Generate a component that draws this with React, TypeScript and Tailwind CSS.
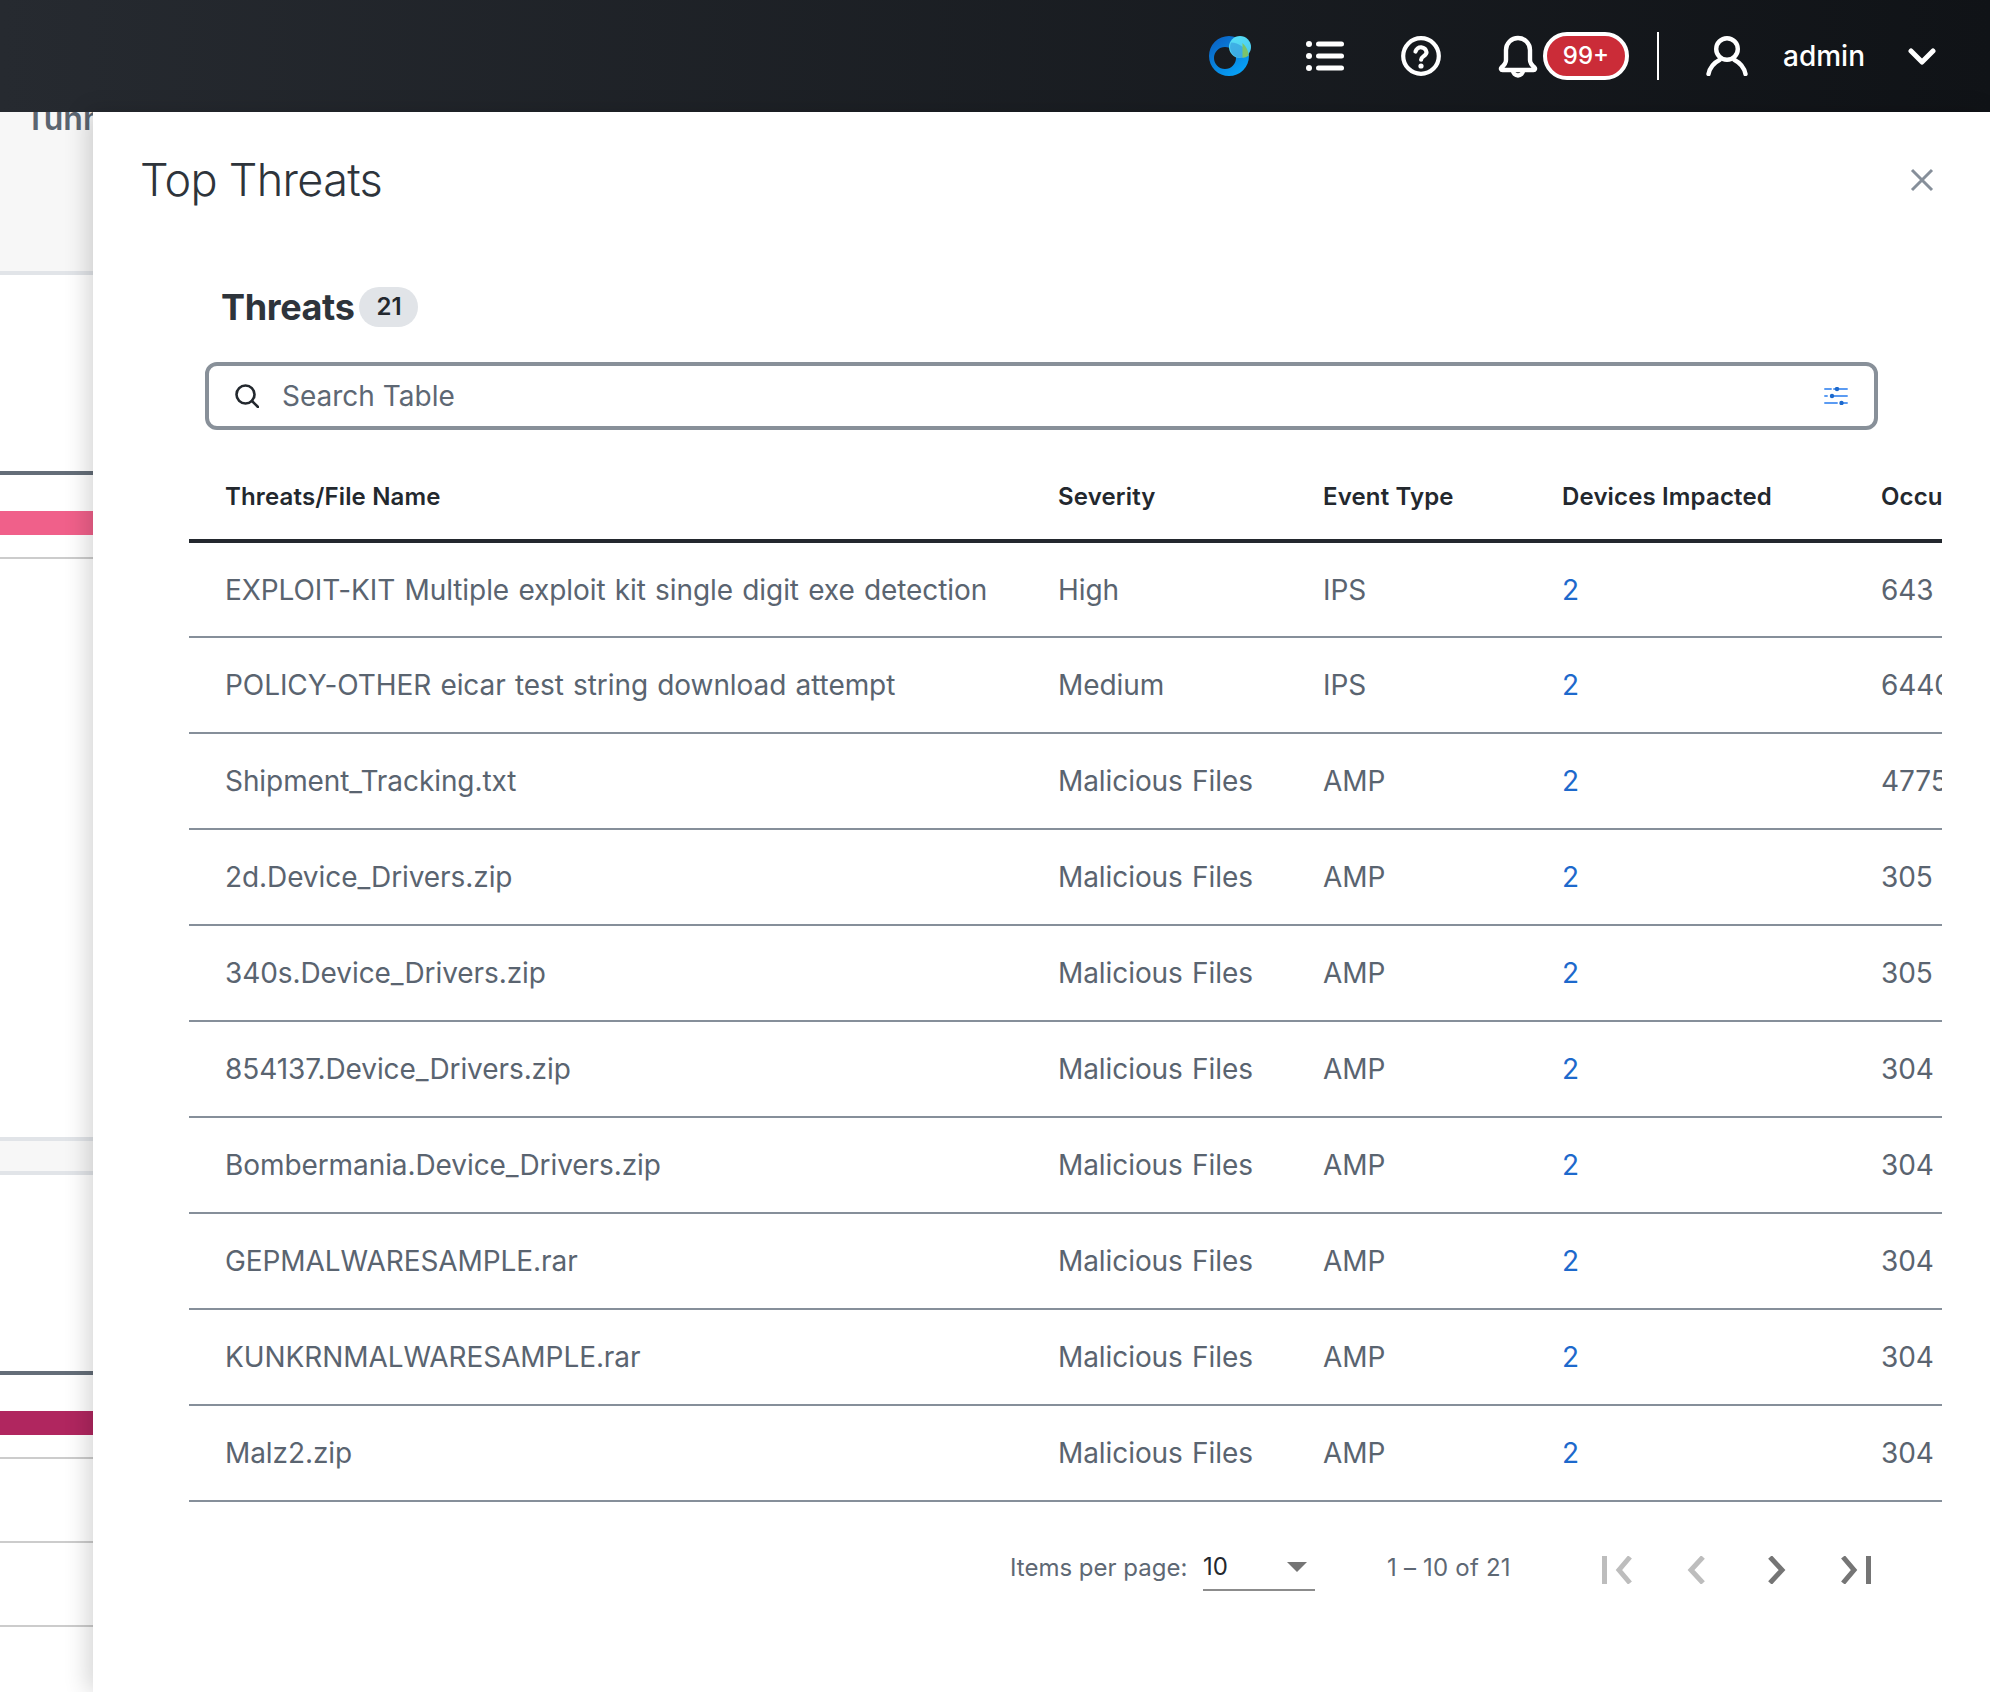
const rows = [
  { name: "EXPLOIT-KIT Multiple exploit kit single digit exe detection", severity: "High", type: "IPS", count: "643" },
  { name: "POLICY-OTHER eicar test string download attempt", severity: "Medium", type: "IPS", count: "6440" },
  { name: "Shipment_Tracking.txt", severity: "Malicious Files", type: "AMP", count: "4775" },
  { name: "2d.Device_Drivers.zip", severity: "Malicious Files", type: "AMP", count: "305" },
  { name: "340s.Device_Drivers.zip", severity: "Malicious Files", type: "AMP", count: "305" },
  { name: "854137.Device_Drivers.zip", severity: "Malicious Files", type: "AMP", count: "304" },
  { name: "Bombermania.Device_Drivers.zip", severity: "Malicious Files", type: "AMP", count: "304" },
  { name: "GEPMALWARESAMPLE.rar", severity: "Malicious Files", type: "AMP", count: "304" },
  { name: "KUNKRNMALWARESAMPLE.rar", severity: "Malicious Files", type: "AMP", count: "304" },
  { name: "Malz2.zip", severity: "Malicious Files", type: "AMP", count: "304" },
];

function Logo() {
  return (
    <svg width="44" height="42" viewBox="0 0 44 42" fill="none" className="shrink-0">
      <defs>
        <linearGradient id="ring" x1="4" y1="4" x2="30" y2="38" gradientUnits="userSpaceOnUse">
          <stop offset="0" stopColor="#0a62c4" />
          <stop offset="1" stopColor="#07a0f5" />
        </linearGradient>
        <linearGradient id="dot" x1="26" y1="2" x2="38" y2="24" gradientUnits="userSpaceOnUse">
          <stop offset="0" stopColor="#56dcf5" />
          <stop offset="1" stopColor="#48c9ee" />
        </linearGradient>
      </defs>
      <path
        fillRule="evenodd"
        clipRule="evenodd"
        d="M20 1a20 20 0 1 0 0 40a20 20 0 0 0 0-40ZM16 12a11 11 0 1 1 0 22a11 11 0 0 1 0-22Z"
        fill="url(#ring)"
      />
      <circle cx="31" cy="12" r="11" fill="url(#dot)" />
      <path d="M22 7.500a20 20 0 0 1 17.700 13a11 11 0 0 1-8.200 2.500a11 11 0 0 1-9.500-15.500Z" fill="#2f8fd8" opacity="0.55" />
      <path d="M33.500 8a20 20 0 0 1 6.200 12.500a11 11 0 0 1-6.200 2.300Z" fill="#7cc36a" />
    </svg>
  );
}

function ListIcon() {
  return (
    <svg width="38" height="32" viewBox="0 0 38 32" fill="white" className="shrink-0">
      <circle cx="3" cy="4" r="3" />
      <circle cx="3" cy="16" r="3" />
      <circle cx="3" cy="28" r="3" />
      <rect x="10" y="1.500" width="28" height="5" rx="2.500" />
      <rect x="10" y="13.500" width="28" height="5" rx="2.500" />
      <rect x="10" y="25.500" width="28" height="5" rx="2.500" />
    </svg>
  );
}

function HelpIcon() {
  return (
    <svg width="40" height="40" viewBox="0 0 40 40" fill="none" stroke="white" strokeWidth="4.200" strokeLinecap="round" className="shrink-0">
      <circle cx="20" cy="20" r="17.800" />
      <path d="M14.500 15.500a5.600 5.600 0 0 1 11 0.800c0 3.600-5.400 4-5.400 7.400" />
      <circle cx="20" cy="30" r="2.600" fill="white" stroke="none" />
    </svg>
  );
}

function BellIcon() {
  return (
    <svg width="40" height="44" viewBox="0 0 40 44" fill="none" stroke="white" strokeWidth="4.400" strokeLinecap="round" strokeLinejoin="round" className="shrink-0">
      <path d="M8 16a12 12 0 0 1 24 0v10c0 3 1.500 5 4.500 7.500c1 1 .5 2.500-1 2.500h-31c-1.500 0-2-1.500-1-2.500c3-2.500 4.500-4.500 4.500-7.500Z" />
      <path d="M15 36.500a5 5 0 0 0 10 0" />
    </svg>
  );
}

function UserIcon() {
  return (
    <svg width="42" height="40" viewBox="0 0 42 40" fill="none" stroke="white" strokeWidth="4.400" strokeLinecap="round" className="shrink-0">
      <circle cx="21" cy="13" r="10.800" />
      <path d="M2.500 38c1.500-7 6-11.500 11-14" />
      <path d="M39.500 38c-1.500-7-6-11.500-11-14" />
    </svg>
  );
}

function SearchIcon() {
  return (
    <svg width="24" height="24" viewBox="0 0 24 24" fill="none" stroke="#23282e" strokeWidth="2.600" strokeLinecap="round" className="shrink-0">
      <circle cx="10.500" cy="10.500" r="9" />
      <path d="M17 17l6 6" />
    </svg>
  );
}

function FilterIcon() {
  return (
    <svg width="24" height="18" viewBox="0 0 24 18" fill="none" className="shrink-0">
      <g stroke="#5b9bf2" strokeWidth="1.900" strokeLinecap="round">
        <path d="M1 2h6M10 2h13" />
        <path d="M1 9h2M7 9h16" />
        <path d="M1 16h12M18 16h5" />
      </g>
      <g fill="#1d69cc">
        <circle cx="13" cy="2" r="2.200" />
        <circle cx="8" cy="9" r="2.200" />
        <circle cx="17.500" cy="16" r="2.200" />
      </g>
    </svg>
  );
}

function PageIcon({ d, color, width }: { d: string; color: string; width: number }) {
  return (
    <svg width={width} height="28" viewBox={`0 0 ${width} 28`} fill="none" stroke={color} strokeWidth="5" className="shrink-0">
      <path d={d} />
    </svg>
  );
}

export default function App() {
  return (
    <div className="flex h-[1692px] w-[1990px] flex-col overflow-hidden bg-white font-['Inter',sans-serif]">
      <header className="flex h-[112px] shrink-0 items-center bg-gradient-to-r from-[#262a30] to-[#101317] pl-[1209px] pr-[55px]">
        <Logo />
        <div className="ml-[53px]"><ListIcon /></div>
        <div className="ml-[57px]"><HelpIcon /></div>
        <div className="ml-[57px]"><BellIcon /></div>
        <span className="ml-[5px] flex h-[48px] w-[86px] shrink-0 items-center justify-center rounded-full border-4 border-white bg-[#cb2c38] text-[24px] font-medium text-white">
          99+
        </span>
        <div className="ml-[28px] h-[48px] w-[2px] shrink-0 bg-white" />
        <div className="ml-[47px]"><UserIcon /></div>
        <span className="ml-[35px] text-[28px] font-medium text-white">admin</span>
        <svg width="28" height="18" viewBox="0 0 28 18" fill="none" stroke="white" strokeWidth="5" strokeLinecap="round" strokeLinejoin="round" className="ml-[43px] shrink-0">
          <path d="M3 4l11 11L25 4" />
        </svg>
      </header>

      <div className="flex min-h-0 flex-1">
        <aside className="flex w-[93px] shrink-0 flex-col">
          <div className="h-[159px] overflow-hidden bg-[#f7f7f7] pl-[25px]">
            <p className="mt-[-17px] whitespace-nowrap text-[32px] font-semibold text-[#5b6570]">Tunnels</p>
          </div>
          <div className="h-[4px] bg-[#e1e4e8]" />
          <div className="mt-[196px] h-[4px] bg-[#646d78]" />
          <div className="mt-[36px] h-[24px] bg-[#f0608a]" />
          <div className="mt-[22px] h-[2px] bg-[#cccccc]" />
          <div className="mt-[578px] h-[4px] bg-[#e1e4e8]" />
          <div className="h-[30px] bg-[#f7f7f7]" />
          <div className="h-[4px] bg-[#e1e4e8]" />
          <div className="mt-[196px] h-[4px] bg-[#646d78]" />
          <div className="mt-[36px] h-[24px] bg-[#b0265f]" />
          <div className="mt-[22px] h-[2px] bg-[#cccccc]" />
          <div className="mt-[82px] h-[2px] bg-[#cccccc]" />
          <div className="mt-[82px] h-[2px] bg-[#cccccc]" />
        </aside>

        <main className="relative flex min-w-0 flex-1 flex-col bg-white pl-[49px] pr-[48px] shadow-[-6px_0_22px_rgba(0,0,0,0.16)]">
          <div className="flex h-[100px] shrink-0 items-end justify-between pb-[2px]">
            <h1 className="ml-[-2px] text-[45px] font-light leading-[60px] tracking-[-0.015em] text-[#2e343b]">Top Threats</h1>
            <svg width="24" height="24" viewBox="0 0 24 24" fill="none" stroke="#868f9a" strokeWidth="3" className="mb-[18px] mr-[8px] shrink-0">
              <path d="M2 2l20 20M22 2L2 22" />
            </svg>
          </div>

          <div className="mt-[75px] flex items-center pl-[79px]">
            <h2 className="text-[36px] font-bold leading-[40px] tracking-[-0.01em] text-[#2e343b]">Threats</h2>
            <span className="ml-[5px] flex h-[40px] w-[59px] items-center justify-center rounded-full bg-[#e1e4e8] text-[24px] font-semibold text-[#23282e]">
              21
            </span>
          </div>

          <div className="ml-[63px] mt-[35px] flex h-[68px] w-[1673px] shrink-0 items-center rounded-xl border-4 border-[#889099] pl-[26px] pr-[26px]">
            <SearchIcon />
            <span className="ml-[23px] flex-1 text-[28px] text-[#5e6874]">Search Table</span>
            <FilterIcon />
          </div>

          <div className="ml-[47px] w-[1753px] overflow-hidden">
            <table className="w-[1753px] table-fixed border-collapse">
              <colgroup>
                <col className="w-[833px]" />
                <col className="w-[265px]" />
                <col className="w-[239px]" />
                <col className="w-[319px]" />
                <col className="w-[97px]" />
              </colgroup>
              <thead>
                <tr className="h-[111px] border-b-4 border-[#23282e] text-left text-[24px] text-[#23282e] tracking-[0.15px]">
                  <th className="whitespace-nowrap pl-[36px] pt-[24px] font-semibold">Threats/File Name</th>
                  <th className="whitespace-nowrap pl-[36px] pt-[24px] font-semibold">Severity</th>
                  <th className="whitespace-nowrap pl-[36px] pt-[24px] font-semibold">Event Type</th>
                  <th className="whitespace-nowrap pl-[36px] pt-[24px] font-semibold">Devices Impacted</th>
                  <th className="overflow-hidden whitespace-nowrap pl-[36px] pt-[24px] font-semibold">Occurrences</th>
                </tr>
              </thead>
              <tbody>
                {rows.map((row) => (
                  <tr key={row.name} className="h-[96px] border-b-2 border-[#868f9a] text-[28px] tracking-[-0.08px] text-[#5a6470] [word-spacing:1.5px]">
                    <td className="whitespace-nowrap pl-[36px]">{row.name}</td>
                    <td className="whitespace-nowrap pl-[36px]">{row.severity}</td>
                    <td className="whitespace-nowrap pl-[36px]">{row.type}</td>
                    <td className="pl-[36px] text-[#1d69cc]">2</td>
                    <td className="overflow-hidden whitespace-nowrap pl-[36px]">{row.count}</td>
                  </tr>
                ))}
              </tbody>
            </table>
          </div>

          <div className="mt-[42px] flex h-[48px] items-center pl-[868px] text-[24px] text-[#5e6874]">
            <span className="w-[193px] whitespace-nowrap">Items per page:</span>
            <div className="flex h-[46px] w-[112px] items-center justify-between border-b-2 border-[#8c8c8c] pr-[8px] text-[#23282e]">
              <span>10</span>
              <span className="h-0 w-0 border-x-[10px] border-t-[10px] border-x-transparent border-t-[#757575]" />
            </div>
            <span className="ml-[72px] w-[215px] whitespace-nowrap tracking-[0.2px]">1 – 10 of 21</span>
            <div className="mt-[4px] flex items-center">
              <PageIcon width={30} color="#bdbdbd" d="M2.500 0v28M28 1L17 14l11 13" />
              <div className="ml-[55px]"><PageIcon width={18} color="#bdbdbd" d="M16 1L4 14l12 13" /></div>
              <div className="ml-[63px]"><PageIcon width={18} color="#757575" d="M2 1l12 13L2 27" /></div>
              <div className="ml-[55px]"><PageIcon width={30} color="#757575" d="M2 1l11 13L2 27M27.500 0v28" /></div>
            </div>
          </div>
        </main>
      </div>
    </div>
  );
}
